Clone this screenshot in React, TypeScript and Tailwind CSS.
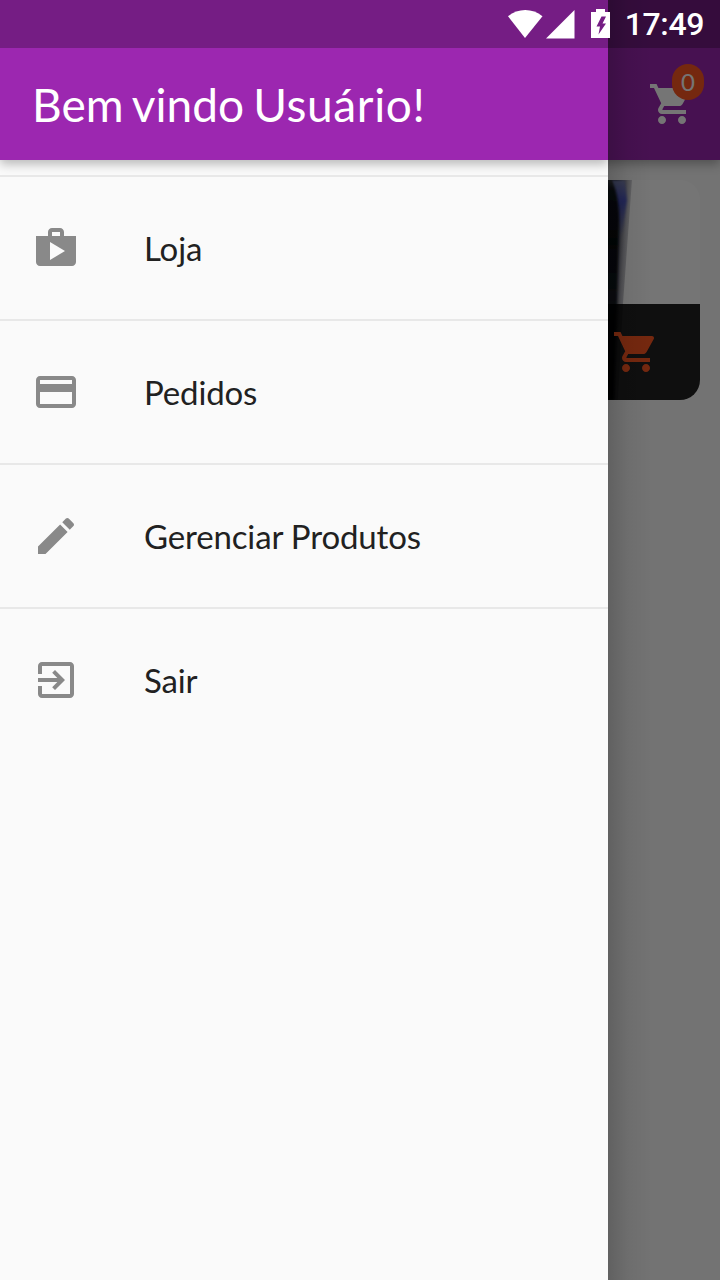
import type { ReactNode } from "react";

const paths = {
  cart: "M7 18c-1.1 0-1.99.9-1.99 2S5.9 22 7 22s2-.9 2-2-.9-2-2-2zM1 2v2h2l3.6 7.59-1.35 2.45c-.16.28-.25.61-.25.96 0 1.1.9 2 2 2h12v-2H7.42c-.14 0-.25-.11-.25-.25l.03-.12.9-1.63h7.45c.75 0 1.41-.41 1.75-1.03l3.58-6.49c.08-.14.12-.31.12-.48 0-.55-.45-1-1-1H5.21l-.94-2H1zm16 16c-1.1 0-1.99.9-1.99 2s.89 2 1.99 2 2-.9 2-2-.9-2-2-2z",
  shop: "M16 6V4c0-1.11-.89-2-2-2h-4c-1.11 0-2 .89-2 2v2H2v13c0 1.11.89 2 2 2h16c1.11 0 2-.89 2-2V6h-6zm-6-2h4v2h-4V4zM9 18V9l7.5 4.5L9 18z",
  card: "M20 4H4c-1.11 0-1.99.89-1.99 2L2 18c0 1.11.89 2 2 2h16c1.11 0 2-.89 2-2V6c0-1.11-.89-2-2-2zm0 14H4v-6h16v6zm0-10H4V6h16v2z",
  edit: "M3 17.25V21h3.75L17.81 9.94l-3.75-3.75L3 17.25zM20.71 7.04c.39-.39.39-1.02 0-1.41l-2.34-2.34c-.39-.39-1.02-.39-1.41 0l-1.83 1.83 3.75 3.75 1.83-1.83z",
  exit: "M10.09 15.59L11.5 17l5-5-5-5-1.41 1.41L12.67 11H3v2h9.67l-2.58 2.59zM19 3H5c-1.11 0-2 .9-2 2v4h2V5h14v14H5v-4H3v4c0 1.1.89 2 2 2h14c1.1 0 2-.9 2-2V5c0-1.1-.9-2-2-2z",
};

function Icon({ name, className }: { name: keyof typeof paths; className: string }) {
  return (
    <svg viewBox="0 0 24 24" className={`size-12 shrink-0 fill-current ${className}`}>
      <path d={paths[name]} />
    </svg>
  );
}

function StatusBar() {
  return (
    <div className="absolute inset-x-0 top-0 flex h-12 items-center justify-end bg-black/25 pr-4 text-white">
      <svg width="108" height="48" viewBox="0 0 108 48" className="fill-current">
        <path d="M4 16.200C14 8 28.500 8 38.500 16.200L21 38Z" />
        <path d="M70.500 10v28.500H42Z" />
        <path
          fillRule="evenodd"
          d="M92 9h9v3h5v26H87V12h5ZM97.500 16.500L92.500 26.500h3.500L94.500 34.500 102 23.500h-3.500L102 16.500Z"
        />
      </svg>
      <span className="ml-[12.500px] font-[Roboto,sans-serif] text-[32px] leading-[48px] font-medium tracking-[-0.4px]">17:49</span>
    </div>
  );
}

function ProductCard() {
  return (
    <div className="relative flex h-[220px] w-[330px] flex-col justify-end overflow-hidden rounded-[20px] bg-white">
      <svg viewBox="0 0 330 220" className="absolute inset-0 size-full">
        <defs>
          <linearGradient id="edge" gradientUnits="userSpaceOnUse" x1="246" y1="0" x2="262" y2="1">
            <stop offset="0" stopColor="#10131c" />
            <stop offset=".35" stopColor="#555665" />
            <stop offset=".75" stopColor="#b0b0b8" />
            <stop offset="1" stopColor="#d4d4d8" />
          </linearGradient>
          <linearGradient id="glow" x1="0" x2="0" y1="0" y2="1">
            <stop offset="0" stopColor="#8088b8" stopOpacity=".9" />
            <stop offset=".35" stopColor="#4650c0" stopOpacity=".95" />
            <stop offset="1" stopColor="#4650a8" stopOpacity="0" />
          </linearGradient>
          <linearGradient id="body" x1="0" x2="0" y1="0" y2="1">
            <stop offset="0" stopColor="#54565c" />
            <stop offset=".07" stopColor="#11141b" />
            <stop offset=".3" stopColor="#06090f" />
            <stop offset=".6" stopColor="#171c26" />
            <stop offset="1" stopColor="#06090f" />
          </linearGradient>
          <filter id="soft" x="-50%" width="200%">
            <feGaussianBlur stdDeviation="1" />
          </filter>
        </defs>
        <path d="M60 0H262L253 124 248 220H60Z" fill="url(#edge)" />
        <path d="M241 0H255L257 20 253 50 249 60Z" fill="url(#glow)" filter="url(#soft)" />
        <path d="M60 -6H239C246 8 249 20 249 40L247 124 244 220H60Z" fill="url(#body)" filter="url(#soft)" />
      </svg>
      <div className="relative flex h-24 items-center justify-end bg-black/87 pr-10">
        <Icon name="cart" className="text-[#ff5722]" />
      </div>
    </div>
  );
}

function StorePage() {
  return (
    <div className="flex h-full flex-col bg-[#fafafa]">
      <header className="z-0 flex h-40 shrink-0 items-center justify-end bg-[#9c27b0] pt-12 pr-6 shadow-[0_4px_10px_rgba(0,0,0,0.3)]">
        <div className="relative">
          <Icon name="cart" className="block text-white" />
          <span className="absolute -top-4 -right-2 flex h-9 w-8 items-center justify-center rounded-2xl bg-[#ff5722] text-2xl text-white">
            0
          </span>
        </div>
      </header>
      <main className="flex justify-end p-5">
        <ProductCard />
      </main>
    </div>
  );
}

function MenuItem({ icon, children }: { icon: keyof typeof paths; children: ReactNode }) {
  return (
    <li className="flex h-36 items-center border-t-2 border-[#e8e8e8] px-8">
      <Icon name={icon} className="text-[#898989]" />
      <span className="ml-16 text-[33px] leading-10 tracking-[-0.15px] text-[#212121]">{children}</span>
    </li>
  );
}

function Drawer() {
  return (
    <aside className="absolute inset-y-0 left-0 w-[608px] bg-[#fafafa]">
      <div className="absolute inset-y-0 left-full w-11 bg-linear-to-r from-black/16 via-black/5 via-45% to-transparent" />
      <header className="relative flex h-40 items-center bg-[#9c27b0] pt-[50px] pl-8 shadow-[0_4px_10px_rgba(0,0,0,0.27)] [clip-path:inset(0_0_-20px_0)]">
        <h1 className="text-[46px] leading-14 text-white [word-spacing:-2.5px]">
          Bem vindo <span className="tracking-[0.6px]">Usuário!</span>
        </h1>
      </header>
      <ul className="pt-[15px]">
        <MenuItem icon="shop">Loja</MenuItem>
        <MenuItem icon="card">Pedidos</MenuItem>
        <MenuItem icon="edit">Gerenciar Produtos</MenuItem>
        <MenuItem icon="exit">Sair</MenuItem>
      </ul>
    </aside>
  );
}

export default function App() {
  return (
    <div className="relative h-[1280px] w-[720px] overflow-hidden font-[Lato,sans-serif]">
      <StorePage />
      <div className="absolute inset-0 bg-black/54" />
      <Drawer />
      <StatusBar />
    </div>
  );
}
